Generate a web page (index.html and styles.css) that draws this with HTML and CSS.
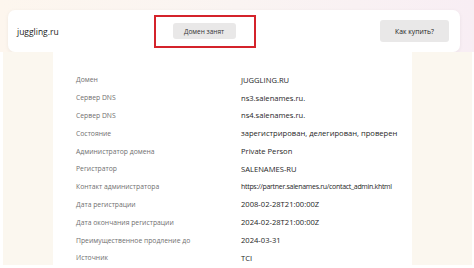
FILE: index.html
```html
<!DOCTYPE html>
<html lang="ru">
<head>
    <meta charset="UTF-8">
    <meta name="viewport" content="width=device-width, initial-scale=1.0">
    <title>juggling.ru — whois</title>
    <link rel="stylesheet" href="styles.css">
</head>
<body>
    <div class="top">
        <div class="header-card">
            <div class="domain-name">juggling.ru</div>
            <div class="status-box">
                <span class="btn btn-small">Домен занят</span>
            </div>
            <span class="btn btn-buy">Как купить?</span>
        </div>
    </div>
    <div class="page">
        <div class="side side-left"></div>
        <div class="panel">
            <div class="label">Домен</div><div class="value">JUGGLING.RU</div>
            <div class="label">Сервер DNS</div><div class="value">ns3.salenames.ru.</div>
            <div class="label">Сервер DNS</div><div class="value">ns4.salenames.ru.</div>
            <div class="label">Состояние</div><div class="value">зарегистрирован, делегирован, проверен</div>
            <div class="label">Администратор домена</div><div class="value">Private Person</div>
            <div class="label">Регистратор</div><div class="value">SALENAMES-RU</div>
            <div class="label">Контакт администратора</div><div class="value value-link">https://partner.salenames.ru/contact_admin.khtml</div>
            <div class="label">Дата регистрации</div><div class="value">2008-02-28T21:00:00Z</div>
            <div class="label">Дата окончания регистрации</div><div class="value">2024-02-28T21:00:00Z</div>
            <div class="label">Преимущественное продление до</div><div class="value">2024-03-31</div>
            <div class="label">Источник</div><div class="value">TCI</div>
        </div>
        <div class="side side-right"></div>
    </div>
</body>
</html>
```

FILE: styles.css
```css
body {
    margin: 0;
    font-family: "Open Sans", "Noto Sans", sans-serif;
    background: #fff;
    overflow: hidden;
}

.top {
    padding: 10px 14px 0 8px;
    background: linear-gradient(90deg, #fdf6ee 0%, #faf4f2 50%, #f8eef4 100%);
}

.header-card {
    display: flex;
    align-items: center;
    height: 42px;
    background: #fff;
    border-radius: 7px;
    box-shadow: 0 1px 4px rgba(0, 0, 0, 0.06);
    padding: 0 11px 0 9px;
}

.domain-name {
    font-size: 8.5px;
    color: #222;
    width: 137px;
}

.status-box {
    display: flex;
    align-items: center;
    justify-content: center;
    width: 96px;
    height: 29px;
    border: 2px solid #d4232b;
    padding-right: 2px;
}

.btn {
    display: inline-flex;
    align-items: center;
    justify-content: center;
    background: #e9e8e8;
    color: #333;
    border-radius: 3px;
}

.btn-small {
    width: 63px;
    height: 16px;
    font-size: 6.5px;
}

.btn-buy {
    margin-left: auto;
    width: 69px;
    height: 22px;
    font-size: 6.8px;
    color: #222;
}

.page {
    display: grid;
    grid-template-columns: 3px 50px 359px 60px 1fr;
    height: 214px;
}

.side {
    background: #fbf7ef;
    height: 213px;
}

.side-left {
    grid-column: 2;
}

.panel {
    display: grid;
    grid-template-columns: 165px minmax(0, 1fr);
    grid-auto-rows: 17.8px;
    align-items: center;
    padding: 19px 0 0 23px;
    background: #fff;
    white-space: nowrap;
}

.label {
    font-size: 6.8px;
    color: #707070;
}

.value {
    font-size: 7.6px;
    color: #262626;
}

.value-link {
    font-size: 7px;
    letter-spacing: -0.3px;
}
```
